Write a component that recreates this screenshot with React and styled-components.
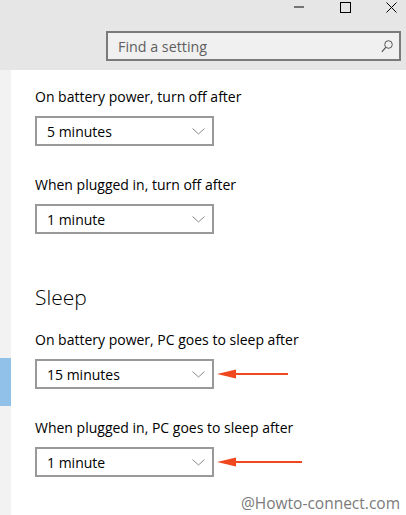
import styled, { createGlobalStyle } from "styled-components";

const Global = createGlobalStyle`
  html, body { margin: 0; padding: 0; background: #fff; overflow: hidden; }
  body { font-family: "Open Sans", "Noto Sans", sans-serif; color: #000; }
`;

const Window = styled.div`
  width: 406px;
  height: 515px;
  display: flex;
  flex-direction: column;
`;

const TopBar = styled.div`
  height: 70px;
  background: #e6e6e6;
  display: flex;
  flex-direction: column;
`;

const Controls = styled.div`
  height: 31px;
  display: flex;
  justify-content: flex-end;
  gap: 34px;
  padding-right: 9px;
`;

const ControlBtn = styled.div`
  width: 12px;
  height: 14px;
  display: flex;
  align-items: center;
  justify-content: center;
`;

const SearchRow = styled.div`
  display: flex;
  justify-content: flex-end;
  padding-right: 5px;
`;

const SearchBox = styled.div`
  box-sizing: border-box;
  width: 295px;
  height: 30px;
  border: 2px solid #7a7a7a;
  background: #f0f0f0;
  display: flex;
  align-items: center;
  justify-content: space-between;
  padding: 0 6px 0 10px;
`;

const Placeholder = styled.span`
  font-size: 14.3px;
  color: #5f5f5f;
`;

const Body = styled.div`
  flex: 1;
  display: flex;
`;

const Strip = styled.div`
  width: 11px;
  background: #f2f2f2;
  display: flex;
  flex-direction: column;
`;

const StripMark = styled.div`
  margin-top: 288px;
  height: 48px;
  background: #91c1e8;
`;

const Content = styled.div`
  flex: 1;
  padding: 17px 0 0 24px;
  display: flex;
  flex-direction: column;
`;

const Label = styled.div`
  font-size: 14px;
  line-height: 20px;
  margin-top: ${(p) => p.$gap}px;
  margin-bottom: 9px;
`;

const Heading = styled.div`
  font-size: 21px;
  font-weight: 300;
  line-height: 28px;
  margin-top: 49px;
  margin-bottom: 19px;
`;

const Row = styled.div`
  display: flex;
  align-items: center;
`;

const Select = styled.div`
  box-sizing: border-box;
  width: 179px;
  height: 30px;
  border: 2px solid #999;
  display: flex;
  align-items: center;
  justify-content: space-between;
  padding: 0 7px 0 10px;
  font-size: 14px;
`;

const Watermark = styled.div`
  margin-top: auto;
  align-self: flex-end;
  padding: 0 6px 2px 0;
  font-size: 15.5px;
  line-height: 20px;
  color: #7a7a7a;
`;

const Chevron = () => (
  <svg width="13" height="7" viewBox="0 0 13 7">
    <path d="M0.5 0.5 L6.5 6 L12.5 0.5" fill="none" stroke="#8a8a8a" strokeWidth="1" />
  </svg>
);

const Arrow = ({ len }) => (
  <svg width={len + 4} height="12" viewBox={`0 0 ${len + 4} 12`} style={{ marginLeft: 2 }}>
    <path d={`M18 6 L${len + 2} 6`} stroke="#f0471f" strokeWidth="2" />
    <path d="M1 6 L20 1.5 L20 10.5 Z" fill="#f0471f" />
  </svg>
);

const Dropdown = ({ value, arrow }) => (
  <Row>
    <Select>
      <span>{value}</span>
      <Chevron />
    </Select>
    {arrow && <Arrow len={arrow} />}
  </Row>
);

export default function App() {
  return (
    <Window>
      <Global />
      <TopBar>
        <Controls>
          <ControlBtn>
            <svg width="10" height="2" viewBox="0 0 10 2">
              <path d="M0 1 H10" stroke="#000" strokeWidth="1" />
            </svg>
          </ControlBtn>
          <ControlBtn>
            <svg width="11" height="11" viewBox="0 0 11 11">
              <rect x="0.5" y="0.5" width="10" height="10" fill="none" stroke="#000" />
            </svg>
          </ControlBtn>
          <ControlBtn>
            <svg width="11" height="11" viewBox="0 0 11 11">
              <path d="M0.5 0.5 L10.5 10.5 M10.5 0.5 L0.5 10.5" stroke="#000" />
            </svg>
          </ControlBtn>
        </Controls>
        <SearchRow>
          <SearchBox>
            <Placeholder>Find a setting</Placeholder>
            <svg width="12" height="13" viewBox="0 0 12 13">
              <circle cx="7.5" cy="4.5" r="3.8" fill="none" stroke="#555" strokeWidth="1" />
              <path d="M4.8 7.3 L0.8 11.8" stroke="#555" strokeWidth="1.2" />
            </svg>
          </SearchBox>
        </SearchRow>
      </TopBar>
      <Body>
        <Strip>
          <StripMark />
        </Strip>
        <Content>
          <Label $gap={0}>On battery power, turn off after</Label>
          <Dropdown value="5 minutes" />
          <Label $gap={29}>When plugged in, turn off after</Label>
          <Dropdown value="1 minute" />
          <Heading>Sleep</Heading>
          <Label $gap={0}>On battery power, PC goes to sleep after</Label>
          <Dropdown value="15 minutes" arrow={70} />
          <Label $gap={29}>When plugged in, PC goes to sleep after</Label>
          <Dropdown value="1 minute" arrow={84} />
          <Watermark>@Howto-connect.com</Watermark>
        </Content>
      </Body>
    </Window>
  );
}
